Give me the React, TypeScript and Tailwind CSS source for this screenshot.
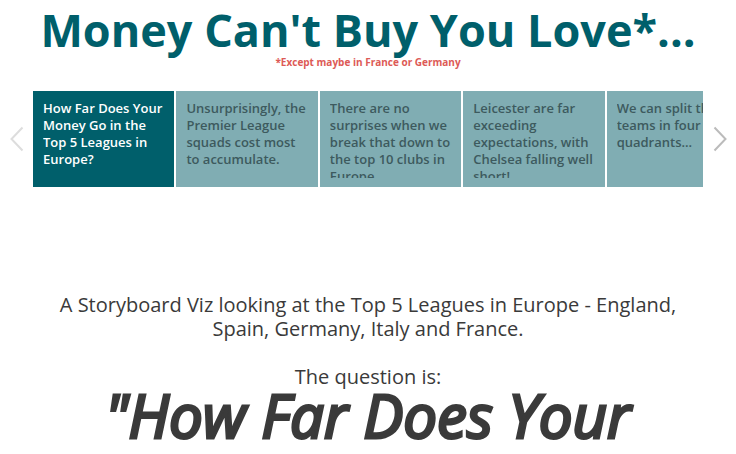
const points = [
  "How Far Does Your Money Go in the Top 5 Leagues in Europe?",
  "Unsurprisingly, the Premier League squads cost most to accumulate.",
  "There are no surprises when we break that down to the top 10 clubs in Europe.",
  "Leicester are far exceeding expectations, with Chelsea falling well short!",
  "We can split the teams in four quadrants...",
];

function Arrow({ label, d, color }: { label: string; d: string; color: string }) {
  return (
    <button type="button" aria-label={label} className={`flex w-[33px] shrink-0 items-center justify-center ${color}`}>
      <svg width="16" height="26" viewBox="0 0 16 26" fill="none" stroke="currentColor" strokeWidth="2">
        <path d={d} />
      </svg>
    </button>
  );
}

export default function App() {
  return (
    <main className="h-screen overflow-hidden bg-white font-['Open_Sans',sans-serif] text-[#3a3a3a]">
      <header className="pt-1 text-center font-bold">
        <h1 className="whitespace-nowrap text-[45px] leading-[52px] text-[#005f6b]">Money Can't Buy You Love*...</h1>
        <p className="text-[10px] leading-3 text-[#dd5a56]">*Except maybe in France or Germany</p>
      </header>
      <nav aria-label="Story points" className="mt-[23px] flex">
        <Arrow label="Previous" d="M13.5 1.5 2.5 13l11 11.5" color="text-[#dddddd]" />
        <div className="min-w-0 flex-1 overflow-hidden">
          <div className="flex w-[715px] gap-0.5">
            {points.map((text, i) => (
              <button
                key={text}
                type="button"
                className={`flex h-24 flex-1 basis-0 px-2.5 py-[9px] text-left text-[13px] leading-[17px] font-semibold ${i === 0 ? "bg-[#005f6b] text-white" : "bg-[#80adb3] text-[#3d5a5e]"}`}
              >
                <span className="block h-full w-full overflow-hidden">{text}</span>
              </button>
            ))}
          </div>
        </div>
        <Arrow label="Next" d="M2.5 1.5l11 11.5-11 11.5" color="text-[#bbbbbb]" />
      </nav>
      <section className="mt-[106px] px-10 text-center">
        <p className="text-[20px] leading-6">A Storyboard Viz looking at the Top 5 Leagues in Europe - England, Spain, Germany, Italy and France.</p>
        <p className="mt-6 text-[20px] leading-6">The question is:</p>
        <p className="text-[60px] leading-[52px] whitespace-nowrap italic [-webkit-text-stroke:3px_#3a3a3a]">"How Far Does Your</p>
      </section>
    </main>
  );
}
